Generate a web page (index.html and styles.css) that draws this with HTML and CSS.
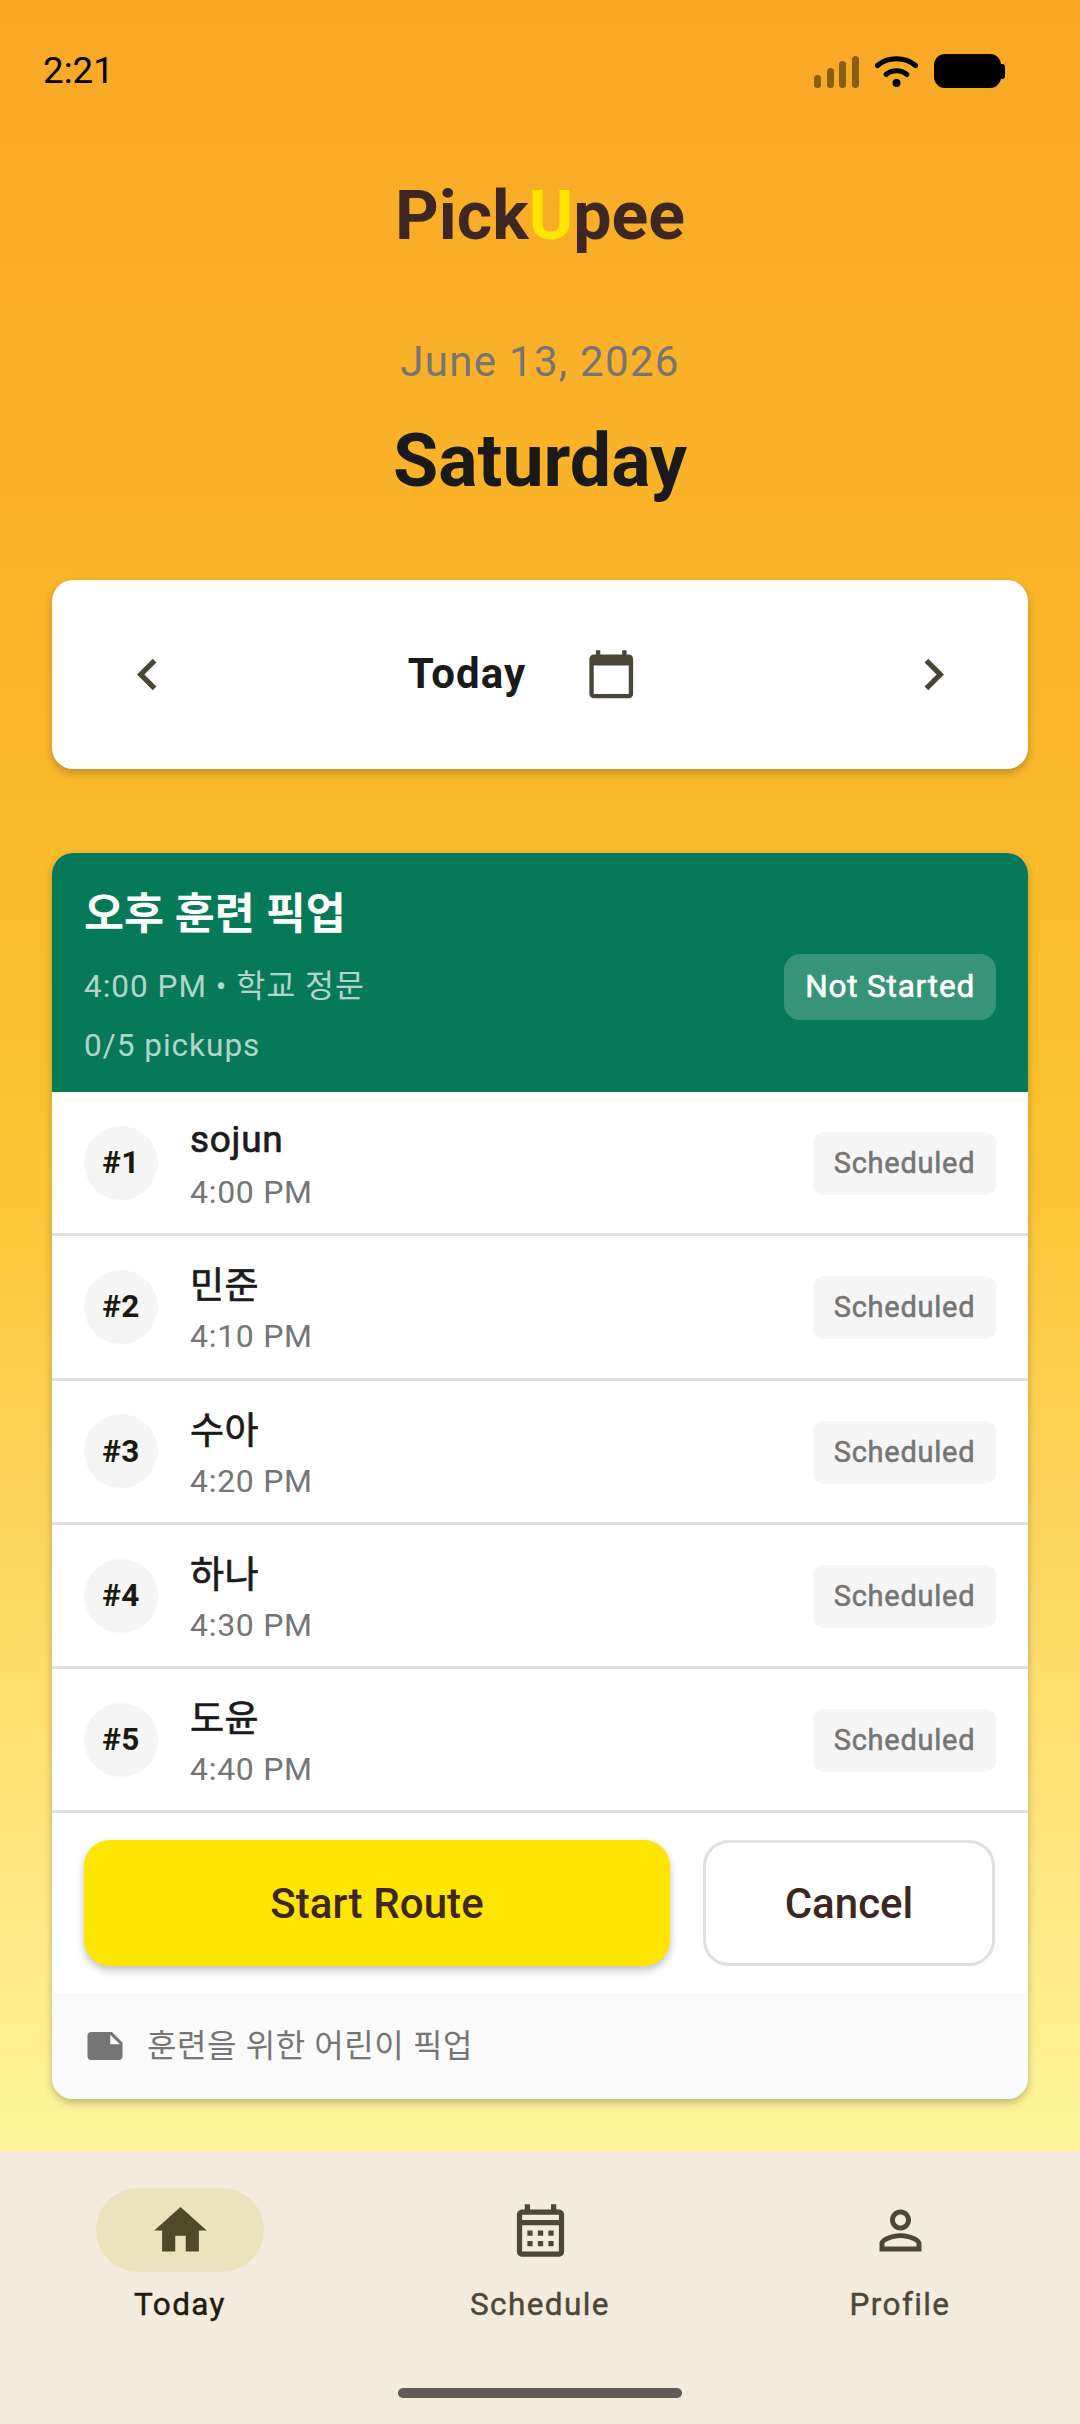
FILE: index.html
```html
<!DOCTYPE html>
<html lang="ko">
<head>
<meta charset="utf-8">
<title>PickUpee</title>
<link rel="stylesheet" href="styles.css">
</head>
<body>
<div class="screen">
  <main class="main">
    <div class="status">
      <span class="clock">2:21</span>
      <div class="status-icons">
        <div class="signal"><i class="s1"></i><i class="s2"></i><i class="s3"></i><i class="s4"></i></div>
        <svg class="wifi" viewBox="0 0 43 33"><path d="M2.5 11.5C13 2.5 30 2.5 40.5 11.5" fill="none" stroke="#000" stroke-width="5" stroke-linecap="round"/><path d="M11 20.5C17 15.5 26 15.5 32 20.5" fill="none" stroke="#000" stroke-width="5" stroke-linecap="round"/><circle cx="21.5" cy="29" r="4" fill="#000"/></svg>
        <div class="battery"><span class="cell"></span><span class="nub"></span></div>
      </div>
    </div>
    <h1 class="logo">Pick<span class="logo-u">U</span>pee</h1>
    <p class="date">June 13, 2026</p>
    <h2 class="day">Saturday</h2>

    <section class="card day-card">
      <button class="icon-btn"><svg class="ic63" viewBox="0 0 24 24"><path d="M15.41 7.41L14 6l-6 6 6 6 1.41-1.41L10.83 12z"/></svg></button>
      <div class="day-mid">
        <span class="day-label">Today</span>
        <button class="icon-btn"><svg class="ic52" viewBox="0 0 24 24"><path d="M20 3h-1V1h-2v2H7V1H5v2H4c-1.1 0-2 .9-2 2v16c0 1.1.9 2 2 2h16c1.1 0 2-.9 2-2V5c0-1.1-.9-2-2-2zm0 18H4V8h16v13z"/></svg></button>
      </div>
      <button class="icon-btn"><svg class="ic63" viewBox="0 0 24 24"><path d="M8.59 16.59L10 18l6-6-6-6-1.41 1.41L13.17 12z"/></svg></button>
    </section>

    <section class="card route">
      <header class="route-head">
        <h3 class="route-title">오후 훈련 픽업</h3>
        <div class="route-meta">
          <div class="route-lines">
            <p class="route-sub">4:00 PM • 학교 정문</p>
            <p class="route-count">0/5 pickups</p>
          </div>
          <span class="route-status">Not Started</span>
        </div>
      </header>
      <div class="row"><span class="num">#1</span><div class="who"><span class="name">sojun</span><span class="time">4:00 PM</span></div><span class="chip">Scheduled</span></div>
      <div class="row"><span class="num">#2</span><div class="who"><span class="name name-ko">민준</span><span class="time">4:10 PM</span></div><span class="chip">Scheduled</span></div>
      <div class="row"><span class="num">#3</span><div class="who"><span class="name name-ko">수아</span><span class="time">4:20 PM</span></div><span class="chip">Scheduled</span></div>
      <div class="row"><span class="num">#4</span><div class="who"><span class="name name-ko">하나</span><span class="time">4:30 PM</span></div><span class="chip">Scheduled</span></div>
      <div class="row"><span class="num">#5</span><div class="who"><span class="name name-ko">도윤</span><span class="time">4:40 PM</span></div><span class="chip">Scheduled</span></div>
      <div class="actions">
        <button class="btn btn-start">Start Route</button>
        <button class="btn btn-cancel">Cancel</button>
      </div>
      <footer class="note">
        <svg class="note-ic" viewBox="0 0 24 24"><path d="M22 10l-6-6H4c-1.1 0-2 .9-2 2v12.01c0 1.1.9 1.99 2 1.99l16-.01c1.1 0 2-.89 2-1.99v-8zm-7-4.5l5.5 5.5H15V5.5z"/></svg>
        <span>훈련을 위한 어린이 픽업</span>
      </footer>
    </section>
  </main>

  <nav class="nav">
    <div class="tab tab-on">
      <span class="pill"><svg class="ic63" viewBox="0 0 24 24"><path d="M10 20v-6h4v6h5v-8h3L12 3 2 12h3v8z"/></svg></span>
      <span class="tab-label">Today</span>
    </div>
    <div class="tab">
      <span class="pill"><svg class="ic63" viewBox="0 0 24 24"><path d="M19 4h-1V2h-2v2H8V2H6v2H5c-1.11 0-1.99.9-1.99 2L3 20c0 1.1.89 2 2 2h14c1.1 0 2-.9 2-2V6c0-1.1-.9-2-2-2zm0 16H5V10h14v10zm0-12H5V6h14v2zM9 14H7v-2h2v2zm4 0h-2v-2h2v2zm4 0h-2v-2h2v2zm-8 4H7v-2h2v2zm4 0h-2v-2h2v2zm4 0h-2v-2h2v2z"/></svg></span>
      <span class="tab-label">Schedule</span>
    </div>
    <div class="tab">
      <span class="pill"><svg class="ic63" viewBox="0 0 24 24"><path d="M12 5.9c1.16 0 2.1.94 2.1 2.1s-.94 2.1-2.1 2.1S9.9 9.16 9.9 8s.94-2.1 2.1-2.1m0 9c2.97 0 6.1 1.46 6.1 2.1v1.1H5.9V17c0-.64 3.13-2.1 6.1-2.1M12 4C9.79 4 8 5.79 8 8s1.79 4 4 4 4-1.79 4-4-1.79-4-4-4zm0 9c-2.67 0-8 1.34-8 4v3h16v-3c0-2.66-5.33-4-8-4z"/></svg></span>
      <span class="tab-label">Profile</span>
    </div>
    <span class="home-bar"></span>
  </nav>
</div>
</body>
</html>
```

FILE: styles.css
```css
* { box-sizing: border-box; margin: 0; padding: 0; }
html, body { width: 1080px; height: 2424px; overflow: hidden; }
body { font-family: Roboto, "Noto Sans CJK KR", sans-serif; color: #1a1a1a; }
.screen { width: 1080px; height: 2424px; display: flex; flex-direction: column; }
.main { height: 2151px; background: linear-gradient(180deg, #f9a825 0%, #fbc02d 50%, #fff59d 100%); padding: 0 52px; }

.status { height: 92px; margin: 0 -52px; padding: 45px 75px 0 43px; display: flex; justify-content: space-between; }
.clock { font-size: 36.75px; line-height: 52px; color: #000; height: 47px; }
.status-icons { display: flex; height: 34px; margin-top: 9px; }
.signal { display: flex; align-items: flex-end; gap: 5.5px; width: 45px; height: 33px; margin-top: 1px; margin-left: 1px; }
.signal i { display: block; width: 7px; border-radius: 3.5px; background: rgba(0,0,0,.45); }
.s1 { height: 13px; } .s2 { height: 20px; } .s3 { height: 27px; } .s4 { height: 32px; }
.wifi { width: 43px; height: 33px; margin-left: 16px; }
.battery { display: flex; align-items: center; margin-left: 16px; }
.cell { display: block; width: 67px; height: 34px; background: #000; border-radius: 11px; }
.nub { display: block; width: 4px; height: 15px; background: #000; border-radius: 0 3px 3px 0; }

.logo { margin-top: 84px; font-size: 68px; line-height: 80px; font-weight: 700; text-align: center; color: #3e2723; }
.logo-u { color: #ffe600; }
.date { margin-top: 81px; font-size: 42px; line-height: 50px; text-align: center; color: #757575; letter-spacing: 1.3px; }
.day { margin-top: 29px; font-size: 73.5px; line-height: 90px; font-weight: 700; text-align: center; color: #1a1a1a; }

.card { background: #fff; border-radius: 21px; box-shadow: 0 4px 8px rgba(0,0,0,.24); }
.day-card { margin-top: 74px; height: 189px; padding: 0 32px; display: flex; align-items: center; justify-content: space-between; }
.icon-btn { width: 126px; height: 126px; border: 0; background: none; display: flex; align-items: center; justify-content: center; flex: none; }
.icon-btn svg { fill: #4a4637; }
.ic63 { width: 63px; height: 63px; display: block; }
.ic52 { width: 52.5px; height: 52.5px; display: block; }
.day-mid { display: flex; align-items: center; gap: 22px; padding-left: 2px; }
.day-label { font-size: 42px; font-weight: 700; letter-spacing: 1.1px; color: #1a1a1a; margin-top: -2px; }

.route { margin-top: 84px; overflow: hidden; }
.route-head { height: 239px; background: #067a58; padding: 32px 32px 0; color: #fff; }
.route-title { font-size: 43.5px; line-height: 60px; font-weight: 700; letter-spacing: 0; }
.route-meta { display: flex; justify-content: space-between; align-items: flex-start; margin-top: 10px; }
.route-lines { display: flex; flex-direction: column; }
.route-sub, .route-count { font-size: 31.5px; line-height: 44px; color: rgba(255,255,255,.7); letter-spacing: 1px; }
.route-sub { margin-top: 10px; }
.route-count { margin-top: 15px; }
.route-status { margin-top: -1px; height: 66px; line-height: 66px; padding: 0 21px; font-size: 31.5px; font-weight: 400; -webkit-text-stroke: .6px #fff; border-radius: 16px; background: rgba(255,255,255,.2); letter-spacing: .8px; }

.row { height: 144.3px; display: flex; align-items: center; padding: 0 32px; border-bottom: 3px solid #e0e0e0; background: #fff; }
.num { width: 74px; height: 74px; border-radius: 50%; background: #f5f5f5; display: flex; align-items: center; justify-content: center; font-size: 31.5px; font-weight: 700; letter-spacing: .5px; color: #1a1a10; flex: none; }
.who { flex: 1; margin: 4px 0 0 32px; display: flex; flex-direction: column; gap: 5px; }
.name { font-size: 37px; line-height: 50px; font-weight: 400; -webkit-text-stroke: .7px #1a1a1a; color: #1a1a1a; letter-spacing: .7px; }
.name-ko { margin: 3px 0 -3px; letter-spacing: .4px; }
.time { font-size: 32px; line-height: 44px; color: #757575; letter-spacing: .7px; }
.chip { width: 183px; height: 63px; margin-top: 2px; line-height: 63px; text-align: center; background: #f5f5f5; border-radius: 10px; font-size: 29px; font-weight: 400; -webkit-text-stroke: .55px #757575; color: #757575; letter-spacing: .75px; }

.actions { height: 179.5px; padding: 26.5px 32px 0; display: flex; gap: 33px; }
.btn { height: 126px; padding-top: 2px; border-radius: 26px; font-family: inherit; font-size: 42px; font-weight: 500; color: #3e2723; }
.btn-start { width: 586px; border: 0; background: #ffe600; box-shadow: 0 4px 8px rgba(0,0,0,.25); letter-spacing: .1px; }
.btn-cancel { width: 292px; border: 3px solid #e0e0e0; background: #fff; }

.note { height: 106px; background: #fafafa; padding: 0 32px; display: flex; align-items: center; gap: 21px; font-size: 32px; letter-spacing: .6px; color: #757575; line-height: 40px; }
.note span { margin-top: 1px; }
.note-ic { width: 42px; height: 42px; fill: #757575; flex: none; }

.nav { position: relative; height: 273px; background: #f3ecdd; display: flex; padding-top: 37px; }
.tab { flex: 1; display: flex; flex-direction: column; align-items: center; }
.pill { width: 168px; height: 84px; border-radius: 42px; display: flex; align-items: center; justify-content: center; }
.tab-on .pill { background: #eae3bd; }
.tab .pill svg { fill: #4c4838; }
.tab-on .pill svg { fill: #4f4a2c; }
.tab-label { margin-top: 12px; font-size: 31.5px; line-height: 42px; font-weight: 400; -webkit-text-stroke: .45px #4c4838; letter-spacing: 1.4px; color: #4c4838; }
.tab-on .tab-label { color: #1e1c10; -webkit-text-stroke: .45px #1e1c10; }
.home-bar { position: absolute; left: 398px; top: 237px; width: 284px; height: 10px; border-radius: 5px; background: #5f5c54; }
```
